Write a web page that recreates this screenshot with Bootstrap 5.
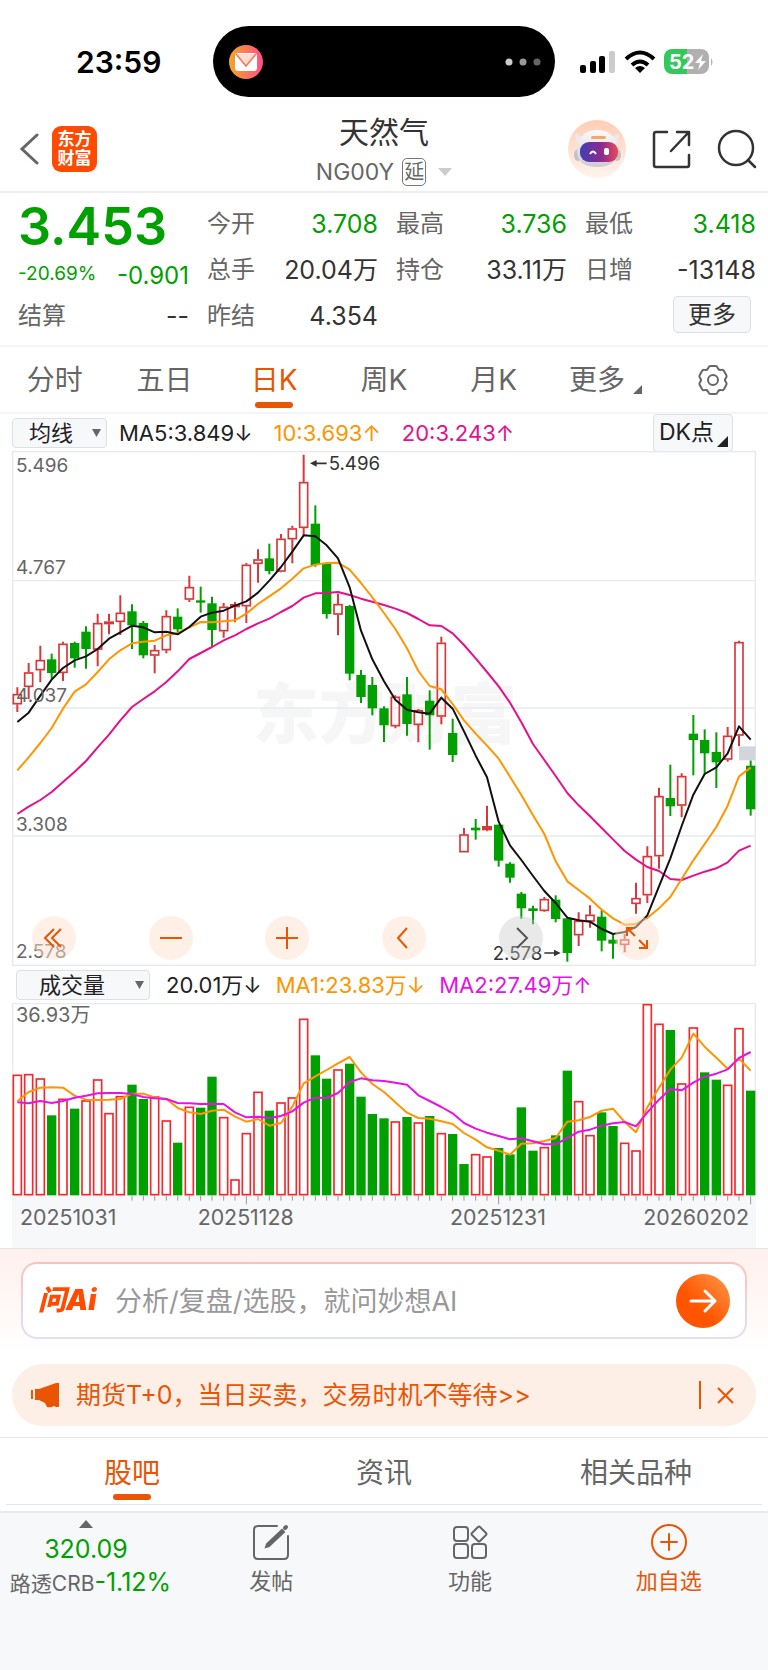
<!DOCTYPE html>
<html lang="zh-CN">
<head>
<meta charset="utf-8">
<meta name="viewport" content="width=device-width, initial-scale=1">
<title>天然气 NG00Y</title>
<link href="https://cdn.jsdelivr.net/npm/bootstrap@5.3.0/dist/css/bootstrap.min.css" rel="stylesheet">
<style>
:root{--up:#d9383b;--down:#00a000;--accent:#ea5504;--ink:#333;--muted:#666}
body{font-family:Inter,"Noto Sans CJK SC",sans-serif;color:var(--ink);background:#fff;font-size:24px;line-height:1.2}
svg{display:block;flex:none}
button,a{font:inherit;color:inherit;text-decoration:none}
.plain{border:0;background:none;padding:0}
.fall{color:var(--down)}
.accent{color:var(--accent)}
.statusbar{padding:26px 54px 0 76px}
.clock{font-size:30px;font-weight:600;color:#000;width:137px}
.island{background:#000;border-radius:36px;height:71px;width:342px;padding:0 14px 0 15px}
.titlebar{height:96px;border-bottom:2px solid #eee;padding:10px 11px 0}
.side{flex:1 1 0}
.side-left{gap:13px}
.side-right{gap:26px}
.brand{width:45px;height:46px;border-radius:9px;background:#ff4a00;color:#fff;font-size:17px;line-height:19px;font-weight:700;padding-top:4px;text-align:center}
.name{font-size:30px;line-height:40px;font-weight:400;margin:0;padding-top:6px}
.code{color:var(--muted);font-size:23px;line-height:40px}
.delay{border:1px solid #777;border-radius:5px;font-size:20px;line-height:26px;padding:0 1px}
.quote{display:grid;grid-template-columns:repeat(4,1fr);column-gap:18px;grid-template-rows:46px 46px 46px;padding:8px 12px 6px 18px;border-bottom:2px solid #f5f5f6;align-items:center}
.quote dt{font-weight:400;color:var(--muted)}
.quote dd{margin:0;font-size:25px}
.quote .pair{display:flex;justify-content:space-between;align-items:center}
.price{font-size:52px;font-weight:600;line-height:50px;padding-top:5px;color:var(--down)}
.small-pct{font-size:19px}
.more{background:#f7f8fa;border:1px solid #dcdfe6;border-radius:5px;padding:0 14px;height:37px;line-height:34px;margin:0 5px 3px 0}
.periods{display:grid;grid-template-columns:repeat(7,1fr);height:67px;border-bottom:2px solid #f5f5f6;color:var(--muted);font-size:28px}
.tabitem{position:relative;display:flex;align-items:center;justify-content:center;color:var(--muted);padding-top:3px}
.tabitem.on{color:var(--accent)}
.tabitem.on::after{content:"";position:absolute;left:50%;bottom:4px;width:38px;height:6px;border-radius:3px;background:var(--accent);transform:translateX(-50%)}
.legend-row{height:37px;color:#222;white-space:nowrap;font-size:22px}
.legend-row .values{display:flex;gap:21px;padding-top:2px}
.legend-row .values-tight{display:flex;gap:14px;padding-top:2px}
.picker{appearance:none;background:#f7f8fa url("data:image/svg+xml,%3Csvg xmlns='http://www.w3.org/2000/svg' width='9' height='8'%3E%3Cpath d='M0 0h9L4.500 8z' fill='%23666'/%3E%3C/svg%3E") no-repeat right 5px center;border:1px solid #dcdfe6;border-radius:4px;height:30px;font-size:22px;line-height:28px;color:#222}
.picker-main{width:95px;padding:0 0 0 16px}
.picker-sub{width:134px;padding:0 0 0 22px}
.ma10{color:#ff9500}.ma20{color:#e6108a}.vma2{color:#e612e6}
.dk{background:#f7f8fa;border:1px solid #dcdfe6;border-radius:4px;height:38px;width:80px;font-size:23px;text-align:left;padding-left:5px;margin-right:11px;position:relative}
.chartbox{position:relative;margin:0 12px}
.chartbox svg.plot{width:100%;height:auto}
.tools{position:absolute;left:2.700%;right:13%;bottom:6px}
.tool{width:44px;height:44px;border-radius:50%;border:0;padding:0;background:rgba(254,225,208,.5);color:var(--accent);display:grid;place-items:center}
.tool.off{background:rgba(200,200,200,.4);color:#555}
.ask{background:linear-gradient(#fff0ec,#fff 90%);border-top:1px solid #e3e5ea;padding:13px 21px 25px}
.askbox{height:77px;border:2px solid transparent;border-radius:16px;background:linear-gradient(#fff,#fff) padding-box,linear-gradient(#ffc0b8,#dce2f8) border-box;padding:0 15px 0 15px}
.asklogo{font-size:28px;font-weight:900;font-style:italic;width:77px;background:linear-gradient(90deg,#ff4a00 70%,#ff9a60);-webkit-background-clip:text;color:transparent}
.askinput{border:0;outline:0;background:none;font-size:27px;min-width:0;padding:4px 0 0;color:#333}
.askinput::placeholder{color:#999;opacity:1}
.promo{margin:0 12px;height:62px;border-radius:31px;background:#fdeee6;color:var(--accent);padding:0 22px 0 18px;font-size:25px}
.feeds{display:grid;grid-template-columns:repeat(3,1fr);margin:0 6px;height:67px;border-bottom:1px solid #e3e5ea;font-size:28px}
.feeds .tabitem{padding-top:5px}
.feedwrap{border-top:1px solid #e3e5ea;margin-top:11px;padding-bottom:6px;border-bottom:2px solid #e6e8ec}
.dock{background:#f7f8fa;color:var(--muted);font-size:22px;min-height:155px}
.indexcell{width:172px;white-space:nowrap;padding-top:7px}
.indexvalue{font-size:25px;line-height:36px;padding-top:3px}
.indexname{font-size:21px;line-height:30px;padding-left:9px}
.indexname .fall{font-size:25px}
.dockitem{padding-top:11px}
</style>
</head>
<body class="d-flex flex-column min-vh-100">

<header>
  <div class="statusbar d-flex align-items-center">
    <div class="clock">23:59</div>
    <div class="island d-flex align-items-center justify-content-between">
      <svg width="36" height="36" viewBox="0 0 36 36"><defs><linearGradient id="mail"><stop stop-color="#f5a623"/><stop offset="1" stop-color="#ff4d8b"/></linearGradient></defs><circle cx="18" cy="18" r="17" fill="url(#mail)"/><rect x="7" y="9" width="22" height="18" rx="3" fill="#fff"/><path d="M8 10l10 12 10-12" fill="#ffdcd0" stroke="#f8745a" stroke-width="1.500"/></svg>
      <svg width="36" height="8" viewBox="0 0 36 8"><circle cx="4" cy="4" r="3.500" fill="#ccc"/><circle cx="18" cy="4" r="3.500" fill="#999"/><circle cx="32" cy="4" r="3.500" fill="#666"/></svg>
    </div>
    <div class="d-flex align-items-center ms-auto gap-2">
      <svg width="36" height="24" viewBox="0 0 36 24"><rect y="15" width="6" height="8" rx="2"/><rect x="10" y="11" width="6" height="12" rx="2"/><rect x="19" y="6" width="6" height="17" rx="2"/><rect x="29" y="1" width="6" height="22" rx="2" fill="#ccc"/></svg>
      <svg width="32" height="24" viewBox="0 0 32 24" fill="none" stroke="#000" stroke-width="4"><path d="M2 9q14-13 28 0M8 15q8-7 16 0"/><path d="M16 23l-5-5q5-4 10 0z" fill="#000" stroke="none"/></svg>
      <svg width="50" height="26" viewBox="0 0 50 26"><defs><linearGradient id="bat"><stop offset=".52" stop-color="#34c759"/><stop offset=".52" stop-color="#b0b0b0"/></linearGradient></defs><rect width="45" height="25" rx="8" fill="url(#bat)"/><path d="M47 9q3 4 0 8z" fill="#b0b0b0"/><text x="5" y="20" font-size="20" font-weight="700" fill="#fff">52</text><path d="M39 5l-8 9h5l-2 7 8-9h-5z" fill="#fff"/></svg>
    </div>
  </div>

  <div class="titlebar d-flex align-items-center">
    <div class="side side-left d-flex align-items-center">
      <a class="ps-2" href="#" aria-label="返回"><svg width="20" height="34" viewBox="0 0 20 34" fill="none" stroke="#666" stroke-width="3" stroke-linecap="round"><path d="M18 3L3 17l15 14"/></svg></a>
      <div class="brand">东方<br>财富</div>
    </div>
    <div class="text-center">
      <h1 class="name">天然气</h1>
      <button class="plain code d-flex align-items-center" type="button"><span>NG00Y</span><span class="delay mx-2">延</span><svg class="ms-1" width="14" height="8"><path d="M0 0h14L7 8z" fill="#ccc"/></svg></button>
    </div>
    <div class="side side-right d-flex align-items-center justify-content-end">
      <button class="plain" type="button" aria-label="助手"><svg width="58" height="58" viewBox="0 0 58 58"><defs><linearGradient id="halo" x2="0" y2="1"><stop stop-color="#ffcdb5"/><stop offset="1" stop-color="#fff4ee"/></linearGradient><linearGradient id="visor"><stop stop-color="#3f3fb5"/><stop offset=".55" stop-color="#8a2a90"/><stop offset="1" stop-color="#e8485a"/></linearGradient><linearGradient id="shell" x2="0" y2="1"><stop stop-color="#fbfafb"/><stop offset="1" stop-color="#cfcbd2"/></linearGradient></defs><circle cx="29" cy="29" r="29" fill="url(#halo)"/><path d="M8 13q-2 8 3 11l8-9q-8 3-11-2zM50 13q2 8-3 11l-8-9q8 3 11-2z" fill="#ece9ed"/><ellipse cx="10" cy="35" rx="4" ry="6" fill="#c4c0c8"/><ellipse cx="49" cy="35" rx="4" ry="6" fill="#c4c0c8"/><path d="M29 10c13 0 21 9 21 22 0 9-8 15-21 15S9 41 9 32c0-13 7-22 20-22z" fill="url(#shell)"/><rect x="23" y="16" width="15" height="3" rx="1.500" fill="#f0a868"/><rect x="12" y="22" width="38" height="20" rx="9" fill="url(#visor)"/><path d="M22 34q3-5 6 0" fill="none" stroke="#fff" stroke-width="2"/><rect x="36" y="28" width="5" height="7" rx="2" fill="#fff"/></svg></button>
      <button class="plain" type="button" aria-label="分享"><svg width="39" height="39" viewBox="0 0 39 39" fill="none" stroke="#333" stroke-width="2.500" stroke-linecap="round" stroke-linejoin="round"><path d="M15 2H4Q2 2 2 4v31q0 2 2 2h31q2 0 2-2V25M25 2h12v13M36 3L19 21"/></svg></button>
      <button class="plain" type="button" aria-label="搜索"><svg width="40" height="40" viewBox="0 0 40 40" fill="none" stroke="#333" stroke-width="2.500" stroke-linecap="round"><circle cx="19" cy="19" r="17"/><path d="M31 31l7 7"/></svg></button>
    </div>
  </div>
</header>

<main>
  <dl class="quote mb-0">
    <div class="price">3.453</div>
    <div class="pair"><dt>今开</dt><dd class="fall">3.708</dd></div>
    <div class="pair"><dt>最高</dt><dd class="fall">3.736</dd></div>
    <div class="pair"><dt>最低</dt><dd class="fall">3.418</dd></div>
    <div class="d-flex justify-content-between align-items-center fall pt-2"><span class="small-pct">-20.69%</span><span class="pt-1">-0.901</span></div>
    <div class="pair"><dt>总手</dt><dd>20.04万</dd></div>
    <div class="pair"><dt>持仓</dt><dd>33.11万</dd></div>
    <div class="pair"><dt>日增</dt><dd>-13148</dd></div>
    <div class="pair"><dt>结算</dt><dd>--</dd></div>
    <div class="pair"><dt>昨结</dt><dd>4.354</dd></div>
    <div></div>
    <div class="d-flex justify-content-end"><button class="more" type="button">更多</button></div>
  </dl>

  <nav class="periods">
    <a class="tabitem" href="#">分时</a><a class="tabitem" href="#">五日</a><a class="tabitem on" href="#" aria-current="page">日K</a><a class="tabitem" href="#">周K</a><a class="tabitem" href="#">月K</a>
    <a class="tabitem ps-1" href="#">更多<svg class="ms-2 mt-3" width="9" height="9"><path d="M9 0v9H0z" fill="#666"/></svg></a>
    <a class="tabitem pt-0" href="#" aria-label="设置"><svg width="32" height="32" viewBox="-16 -16 32 32" fill="none" stroke="#666" stroke-width="2" stroke-linecap="round"><defs><path id="tooth" d="M-6 -10.400C-4 -11.600-5 -14-2.500 -14H2.500C5 -14 4 -11.600 6 -10.400"/></defs><use href="#tooth"/><use href="#tooth" transform="rotate(60)"/><use href="#tooth" transform="rotate(120)"/><use href="#tooth" transform="rotate(180)"/><use href="#tooth" transform="rotate(240)"/><use href="#tooth" transform="rotate(300)"/><circle r="5"/></svg></a>
  </nav>

  <div class="legend-row d-flex align-items-center ps-2 pe-4">
    <select class="picker picker-main ms-1 me-2" aria-label="主图指标"><option>均线</option></select>
    <div class="values ms-1"><span>MA5:3.849↓</span><span class="ma10">10:3.693↑</span><span class="ma20">20:3.243↑</span></div>
    <button class="dk ms-auto" type="button">DK点<svg class="position-absolute bottom-0 end-0 m-1" width="11" height="11"><path d="M11 0v11H0z" fill="#222"/></svg></button>
  </div>

  <div class="chartbox">
    <svg class="plot" id="kline" viewBox="36 4 2232 1545" role="img" aria-label="日K线图"></svg>
    <div class="tools d-flex justify-content-between">
      <button class="tool" type="button" aria-label="最早"><svg width="22" height="22" viewBox="0 0 22 22" fill="none" stroke="currentColor" stroke-width="2"><path d="M11 2L2 11l9 9M18 2l-9 9 9 9"/></svg></button>
      <button class="tool" type="button" aria-label="缩小"><svg width="22" height="22" stroke="currentColor" stroke-width="2"><path d="M0 11h22"/></svg></button>
      <button class="tool" type="button" aria-label="放大"><svg width="22" height="22" stroke="currentColor" stroke-width="2"><path d="M0 11h22M11 0v22"/></svg></button>
      <button class="tool" type="button" aria-label="左移"><svg width="22" height="22" fill="none" stroke="currentColor" stroke-width="2"><path d="M14 1L5 11l9 10"/></svg></button>
      <button class="tool off" type="button" aria-label="右移"><svg width="22" height="22" fill="none" stroke="currentColor" stroke-width="2"><path d="M7 1l10 10L7 21"/></svg></button>
      <button class="tool" type="button" aria-label="全屏"><svg width="22" height="22" fill="none" stroke="currentColor" stroke-width="2"><path d="M1 9V1h8M1 1l8 8M21 13v8h-8M21 21l-8-8"/></svg></button>
    </div>
  </div>

  <div class="legend-row d-flex align-items-center ps-3">
    <select class="picker picker-sub me-3" aria-label="副图指标"><option>成交量</option></select>
    <div class="values-tight"><span>20.01万↓</span><span class="ma10">MA1:23.83万↓</span><span class="vma2">MA2:27.49万↑</span></div>
  </div>

  <div class="chartbox"><svg class="plot" id="volume" viewBox="36 114 2232 735" role="img" aria-label="成交量图"></svg></div>

  <form class="ask">
    <div class="askbox d-flex align-items-center">
      <label class="asklogo" for="q">问Ai</label>
      <input class="askinput flex-grow-1" id="q" type="text" placeholder="分析/复盘/选股，就问妙想AI">
      <button class="plain" type="button" aria-label="发送"><svg width="54" height="54" viewBox="0 0 54 54"><defs><linearGradient id="go" x1="0" y1="1" x2="1" y2="0"><stop offset=".4" stop-color="#ff5500"/><stop offset="1" stop-color="#ff9a4a"/></linearGradient></defs><circle cx="27" cy="27" r="27" fill="url(#go)"/><path d="M15 27h24M29 17l10 10-10 10" fill="none" stroke="#fff" stroke-width="3" stroke-linecap="round" stroke-linejoin="round"/></svg></button>
    </div>
  </form>

  <div class="promo d-flex align-items-center">
    <svg width="30" height="26" viewBox="0 0 30 26" fill="currentColor"><path d="M1 8h2v9H1zM5 7h4L26 1h3v24h-3l-2-1q-3 2-7 1l-2-4-6-3H5z"/></svg>
    <a class="ms-3 me-auto" href="#">期货T+0，当日买卖，交易时机不等待&gt;&gt;</a>
    <svg class="me-3" width="2" height="28"><path d="M0 0h2v28H0z" fill="currentColor"/></svg>
    <button class="plain" type="button" aria-label="关闭"><svg width="17" height="17" stroke="currentColor" stroke-width="2"><path d="M1 1l15 15M16 1L1 16"/></svg></button>
  </div>

  <div class="feedwrap">
    <nav class="feeds"><a class="tabitem on" href="#" aria-current="page">股吧</a><a class="tabitem" href="#">资讯</a><a class="tabitem" href="#">相关品种</a></nav>
  </div>
</main>

<footer class="dock flex-grow-1 d-flex">
  <a class="indexcell d-flex flex-column align-items-center" href="#">
    <svg width="14" height="8"><path d="M7 0l7 8H0z" fill="#666"/></svg>
    <span class="fall indexvalue">320.09</span>
    <span class="indexname">路透CRB<span class="fall">-1.12%</span></span>
  </a>
  <a class="dockitem flex-fill w-25 d-flex flex-column align-items-center gap-2" href="#">
    <svg width="36" height="36" viewBox="0 0 36 36" fill="none" stroke="#666" stroke-width="2" stroke-linecap="round"><path d="M24 2H5Q1 2 1 6v25q0 4 4 4h26q4 0 4-4V12"/><path d="M13 23l1-3L29 6l2 2L16 22z" fill="#666"/><path d="M32 4l1-1" stroke-width="4"/></svg>发帖</a>
  <a class="dockitem flex-fill w-25 d-flex flex-column align-items-center gap-2" href="#">
    <svg width="36" height="36" viewBox="0 0 36 36" fill="none" stroke="#666" stroke-width="2"><rect x="2" y="3" width="14" height="14" rx="3"/><rect x="2" y="20" width="14" height="14" rx="3"/><rect x="20" y="20" width="14" height="14" rx="3"/><path d="M26 3q1-1 2 0l6 6q1 1 0 2l-6 6q-1 1-2 0l-6-6q-1-1 0-2z"/></svg>功能</a>
  <a class="dockitem accent flex-fill w-25 d-flex flex-column align-items-center gap-2" href="#">
    <svg width="36" height="36" viewBox="0 0 36 36" fill="none" stroke="currentColor" stroke-width="2" stroke-linecap="round"><circle cx="18" cy="18" r="17"/><path d="M10 18h16M18 10v16"/></svg>加自选</a>
</footer>

<script src="https://cdn.jsdelivr.net/npm/bootstrap@5.3.0/dist/js/bootstrap.bundle.min.js"></script>
<script>
// Chart units: three per CSS pixel at full width; y grows downwards.
const X = i => Math.round(52 + i * 34.370);
const line = (pts, color) => `<polyline fill="none" stroke="${color}" stroke-width="6" stroke-linejoin="round" points="${pts.map((y, i) => X(i) + ',' + y).join(' ')}"/>`;
const label = (x, y, t, size = 57, fill = '#666') => `<text x="${x}" y="${y}" font-size="${size}" fill="${fill}">${t}</text>`;
const RED = '#d9383b', GREEN = '#00a000';

// [high, body top, body bottom, low, rising?]
const candles = [[713,733,764,787,1],[640,668,712,748,1],[588,631,662,698,1],[612,629,670,687,0],[576,582,670,694,1],[576,580,626,654,0],[530,546,598,657,0],[492,520,600,650,1],[492,515,524,554,1],[437,489,517,556,1],[464,485,527,598,0],[514,520,617,626,0],[586,601,618,671,1],[482,499,602,611,1],[476,501,539,552,0],[378,412,450,457,1],[411,452,459,489,0],[441,461,541,592,0],[460,471,545,564,1],[457,463,473,518,1],[340,345,470,520,1],[299,329,343,399,1],[282,326,364,374,0],[253,267,366,368,1],[228,236,269,341,1],[15,97,235,257,1],[167,222,346,351,0],[340,342,493,507,0],[432,463,495,557,1],[466,469,672,692,0],[661,676,742,760,0],[682,706,776,797,0],[770,776,827,877,0],[737,741,830,836,1],[682,734,823,858,0],[778,781,826,878,1],[722,753,797,900,0],[561,579,801,824,1],[807,850,916,937,0],[1135,1154,1208,1208,1],[1108,1134,1142,1170,0],[1068,1129,1142,1145,1],[1125,1125,1233,1251,0],[1238,1242,1284,1299,0],[1327,1332,1376,1407,0],[1368,1376,1384,1424,0],[1342,1348,1384,1386,1],[1337,1350,1408,1418,0],[1406,1406,1510,1536,0],[1388,1413,1457,1489,1],[1367,1395,1416,1434,1],[1382,1401,1473,1505,0],[1456,1470,1482,1527,0],[1452,1469,1486,1508,1],[1299,1345,1363,1392,1],[1190,1219,1337,1360,1],[1014,1039,1220,1257,1],[945,1045,1070,1099,0],[971,979,1068,1103,1],[796,852,871,977,0],[839,871,911,975,0],[848,907,938,1015,0],[832,858,930,936,1],[573,577,858,890,1],[932,948,1079,1098,0]];
const ma5 = [817,789,738,690,655,632,620,598,567,548,528,533,548,546,554,532,501,489,483,468,455,429,393,352,306,257,260,287,326,413,543,629,695,750,780,788,792,744,777,845,918,983,1116,1187,1231,1279,1324,1360,1404,1412,1416,1438,1453,1447,1432,1397,1310,1226,1129,1035,973,953,911,830,870];
const ma10 = [962,923,880,835,777,726,704,667,629,602,581,576,573,557,550,533,517,518,515,512,492,463,440,416,387,356,345,340,339,360,400,443,490,538,596,664,709,719,763,812,852,888,927,981,1036,1097,1153,1235,1295,1321,1347,1380,1406,1425,1423,1405,1376,1342,1288,1232,1183,1132,1068,980,954];
const ma20 = [1093,1071,1051,1027,997,966,934,893,855,812,772,748,725,697,665,628,610,592,572,557,538,521,507,487,469,444,431,430,427,436,447,456,466,477,490,508,527,529,551,586,626,667,710,759,818,883,931,979,1030,1067,1100,1135,1169,1204,1230,1252,1264,1288,1291,1278,1266,1256,1238,1203,1188];

let k = '<text x="758" y="866" font-size="198" font-weight="900" fill="#f6f6f7">东方财富</text>';
k += '<path d="M36 393H2268M36 775H2268M36 1159H2268" stroke="#e6ecf2" stroke-width="4"/><rect x="38" y="6" width="2228" height="1541" fill="none" stroke="#e8e9eb" stroke-width="4"/>';
candles.forEach(([h, t, b, l, up], i) => {
  const x = X(i);
  if (up) {
    k += `<path d="M${x} ${h}V${t}M${x} ${b}V${l}" stroke="${RED}" stroke-width="6"/>`;
    k += b - t < 14 ? `<rect x="${x - 15}" y="${t}" width="30" height="${b - t}" fill="${RED}"/>`
                    : `<rect x="${x - 12}" y="${t + 2}" width="24" height="${b - t - 4}" fill="none" stroke="${RED}" stroke-width="5"/>`;
  } else {
    k += `<path d="M${x} ${h}V${l}" stroke="${GREEN}" stroke-width="6"/><rect x="${x - 14}" y="${t}" width="28" height="${b - t}" fill="${GREEN}"/>`;
  }
});
k += '<rect x="2217" y="890" width="50" height="42" fill="#d2d5dc"/>';
k += line(ma20, '#e6108a') + line(ma10, '#ff9500') + line(ma5, '#111');
k += label(48, 67, '5.496') + label(48, 374, '4.767') + label(48, 757, '4.037') + label(48, 1143, '3.308') + label(48, 1526, '2.578');
k += label(986, 61, '5.496', 56, '#333') + label(1478, 1530, '2.578', 56, '#333');
k += '<path d="M940 41H980M1633 1510H1672" stroke="#333" stroke-width="5"/><path d="M930 41l20-10v20zM1682 1510l-20-10v20z" fill="#333"/>';
document.getElementById('kline').innerHTML = k;

// Volume bars: [top, rising?]
const bars = [[329,1],[327,1],[340,1],[451,0],[401,1],[431,0],[406,1],[343,1],[444,1],[393,1],[359,0],[402,0],[394,1],[466,1],[533,0],[425,1],[428,0],[335,0],[456,1],[643,1],[504,1],[380,1],[437,0],[412,1],[397,1],[161,1],[271,0],[341,0],[313,1],[296,0],[395,0],[447,0],[460,0],[469,1],[456,0],[472,1],[453,0],[504,1],[507,0],[597,0],[567,1],[574,1],[549,0],[568,0],[427,0],[557,0],[546,1],[511,0],[317,0],[408,1],[510,1],[442,0],[483,0],[533,1],[556,1],[117,1],[176,1],[195,0],[355,1],[187,1],[322,0],[344,0],[359,1],[189,1],[377,0]];
const vma1 = [409,381,368,367,368,392,404,405,404,402,386,386,397,402,429,442,447,437,434,455,470,462,482,474,425,355,334,315,295,276,322,357,381,412,443,459,461,469,477,504,524,547,557,569,536,535,528,519,470,466,456,437,431,471,502,427,368,314,278,206,245,278,311,281,317];
const vma2 = [412,415,408,414,408,398,392,385,384,384,387,396,400,402,414,415,417,416,417,442,457,455,459,453,439,413,398,399,384,351,340,346,348,353,359,391,408,426,445,474,491,503,513,523,520,529,538,538,519,500,494,482,475,471,484,442,404,372,376,353,335,326,313,279,261];
let v = '<rect x="36" y="691" width="2232" height="158" fill="#f7f8fa"/><path d="M38 690V116H2266V690" fill="none" stroke="#e8e9eb" stroke-width="4"/>';
bars.forEach(([t, up], i) => {
  const x = X(i);
  v += up ? `<rect x="${x - 12}" y="${t + 2}" width="24" height="${687 - t}" fill="#fff" stroke="#f5282d" stroke-width="5"/>`
          : `<rect x="${x - 14}" y="${t}" width="28" height="${691 - t}" fill="${GREEN}"/>`;
  if (i > 9) v += `<path d="M${x} 692V${[20, 42, 64].includes(i) ? 718 : 707}" stroke="#999" stroke-width="3"/>`;
});
v += line(vma1, '#ff9500') + line(vma2, '#e612e6');
v += label(48, 171, '36.93万', 60) + label(60, 780, '20251031', 64) + label(593, 780, '20251128', 64) + label(1350, 780, '20251231', 64) + label(1930, 780, '20260202', 64);
document.getElementById('volume').innerHTML = v;
</script>
</body>
</html>
